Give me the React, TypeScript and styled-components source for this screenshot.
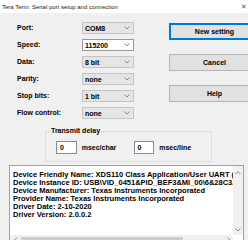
import React from 'react';
import styled, { createGlobalStyle } from 'styled-components';

const GlobalStyle = createGlobalStyle`
  html, body {
    margin: 0;
    padding: 0;
    background: #f0f0f0;
  }
  * {
    box-sizing: border-box;
  }
`;

const fields = [
  { label: 'Port:', value: 'COM8', editable: false },
  { label: 'Speed:', value: '115200', editable: true },
  { label: 'Data:', value: '8 bit', editable: false },
  { label: 'Parity:', value: 'none', editable: false },
  { label: 'Stop bits:', value: '1 bit', editable: false },
  { label: 'Flow control:', value: 'none', editable: false },
];

const infoLines = [
  'Device Friendly Name: XDS110 Class Application/User UART (COM8)',
  'Device Instance ID: USB\\VID_0451&PID_BEF3&MI_00\\6&28C3A5F1&0&0000',
  'Device Manufacturer: Texas Instruments Incorporated',
  'Provider Name: Texas Instruments Incorporated',
  'Driver Date: 2-10-2020',
  'Driver Version: 2.0.0.2',
];

function Chevron({ dir = 'down' }: { dir?: 'down' | 'up' | 'left' | 'right' }) {
  const points = {
    down: '0.5,0.5 3,3 5.5,0.5',
    up: '0.5,3 3,0.5 5.5,3',
    left: '3,0.5 0.5,3 3,5.5',
    right: '0.5,0.5 3,3 0.5,5.5',
  }[dir];
  const w = dir === 'down' || dir === 'up' ? 6 : 4;
  const h = dir === 'down' || dir === 'up' ? 4 : 6;
  return (
    <svg width={w} height={h} viewBox={`0 0 ${w} ${h}`}>
      <polyline points={points} fill='none' stroke='#707070' strokeWidth='0.8' />
    </svg>
  );
}

export default function App() {
  return (
    <>
      <GlobalStyle />
      <Window>
        <TitleBar>
          <span>Tera Term: Serial port setup and connection</span>
          <Close>✕</Close>
        </TitleBar>

        <Top>
          <Form>
            {fields.map((f) => (
              <React.Fragment key={f.label}>
                <Label>{f.label}</Label>
                <Select $editable={f.editable}>
                  <span>{f.value}</span>
                  <Chevron />
                </Select>
              </React.Fragment>
            ))}
          </Form>

          <Buttons>
            <Button $default>New setting</Button>
            <Button>Cancel</Button>
            <Button>Help</Button>
          </Buttons>
        </Top>

        <GroupBox>
          <Legend>Transmit delay</Legend>
          <DelayRow>
            <DelayInput>0</DelayInput>
            <Unit>msec/char</Unit>
            <DelayInput>0</DelayInput>
            <Unit>msec/line</Unit>
          </DelayRow>
        </GroupBox>

        <InfoBox>
          <InfoText>
            {infoLines.map((l) => (
              <div key={l}>{l}</div>
            ))}
          </InfoText>
          <VScroll>
            <Chevron dir='up' />
            <Chevron dir='down' />
          </VScroll>
          <HScroll>
            <Chevron dir='left' />
            <Thumb />
            <Spacer />
            <Chevron dir='right' />
          </HScroll>
        </InfoBox>
      </Window>
    </>
  );
}

const Window = styled.div`
  width: 248px;
  height: 240px;
  overflow: hidden;
  background: #f0f0f0;
  font-family: 'Liberation Sans', Arial, sans-serif;
  color: #000;
`;

const TitleBar = styled.div`
  height: 13px;
  background: #fff;
  display: flex;
  align-items: center;
  justify-content: space-between;
  padding-left: 2px;
  font-size: 6px;
  color: #222;
`;

const Close = styled.span`
  font-size: 7px;
  color: #555;
  margin-right: 1px;
`;

const Top = styled.div`
  display: flex;
  padding-top: 9px;
`;

const Form = styled.div`
  display: grid;
  grid-template-columns: 65px 52px;
  row-gap: 5px;
  padding-left: 17px;
`;

const Label = styled.div`
  font-size: 7px;
  font-weight: bold;
  line-height: 12px;
`;

const Select = styled.div<{ $editable?: boolean }>`
  height: 12px;
  display: flex;
  align-items: center;
  justify-content: space-between;
  padding: 0 3px 0 2px;
  font-size: 7px;
  font-weight: bold;
  background: ${(p) => (p.$editable ? '#fff' : '#e5e5e5')};
  border: 1px solid ${(p) => (p.$editable ? '#9a9a9a' : '#c4c4c4')};
`;

const Buttons = styled.div`
  display: flex;
  flex-direction: column;
  gap: 14px;
  margin-left: 35px;
  padding-top: 1px;
`;

const Button = styled.div<{ $default?: boolean }>`
  width: 91px;
  height: 17px;
  display: flex;
  align-items: center;
  justify-content: center;
  font-size: 7px;
  font-weight: bold;
  background: #e1e1e1;
  border: 1px solid ${(p) => (p.$default ? '#0078d7' : '#b4b4b4')};
  box-shadow: ${(p) => (p.$default ? 'inset 0 0 0 1px #0078d7' : 'none')};
`;

const GroupBox = styled.div`
  position: relative;
  margin: 12px 0 0 45px;
  width: 167px;
  height: 31px;
  border: 1px solid #dcdcdc;
  padding: 9px 0 0 10px;
`;

const Legend = styled.div`
  position: absolute;
  top: -5px;
  left: 4px;
  padding: 0 1px;
  background: #f0f0f0;
  font-size: 7px;
  font-weight: bold;
`;

const DelayRow = styled.div`
  display: flex;
  align-items: center;
`;

const DelayInput = styled.div`
  width: 21px;
  height: 13px;
  background: #fff;
  border: 1px solid #8a8a8a;
  font-size: 7px;
  font-weight: bold;
  line-height: 11px;
  padding-left: 3px;
`;

const Unit = styled.div`
  font-size: 7px;
  font-weight: bold;
  margin: 0 0 0 5px;
  width: 53px;
`;

const InfoBox = styled.div`
  position: relative;
  margin: 3px 0 0 9px;
  width: 235px;
  height: 80px;
  background: #fff;
  border: 1px solid #a0a0a0;
  display: grid;
  grid-template-columns: 1fr 10px;
  grid-template-rows: 69px 10px;
`;

const InfoText = styled.div`
  overflow: hidden;
  white-space: pre;
  padding: 5px 0 0 3px;
  font-size: 7.5px;
  font-weight: bold;
  line-height: 8px;
`;

const VScroll = styled.div`
  background: #f0f0f0;
  display: flex;
  flex-direction: column;
  align-items: center;
  justify-content: space-between;
  padding: 5px 0 3px;
`;

const HScroll = styled.div`
  background: #f0f0f0;
  display: flex;
  align-items: center;
  padding: 0 2px 0 4px;
  gap: 3px;
`;

const Thumb = styled.div`
  width: 162px;
  height: 6px;
  background: #cdcdcd;
`;

const Spacer = styled.div`
  flex: 1;
`;
